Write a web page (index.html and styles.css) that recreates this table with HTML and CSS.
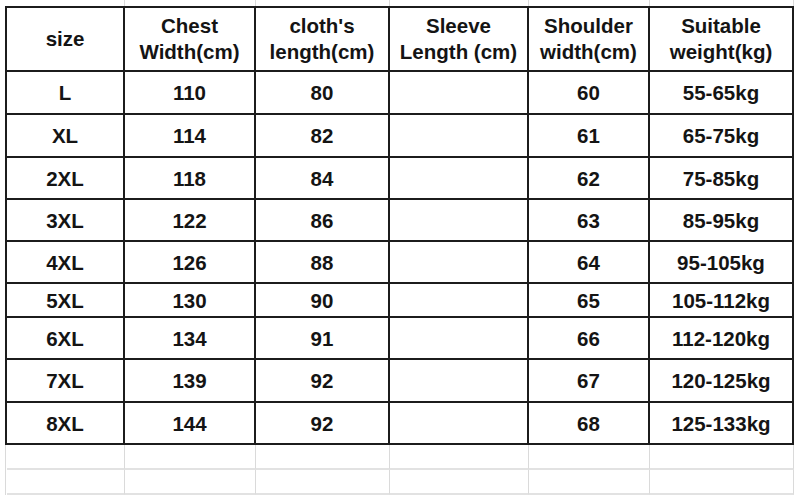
FILE: index.html
```html
<!DOCTYPE html>
<html>
<head>
<meta charset="utf-8">
<link rel="stylesheet" href="styles.css">
</head>
<body>
<div class="sheet">
  <div class="strip top">
    <div></div><div></div><div></div><div></div><div></div><div></div>
  </div>
  <div class="chart">
    <div class="c h">size</div>
    <div class="c h">Chest<br>Width(cm)</div>
    <div class="c h">cloth's<br>length(cm)</div>
    <div class="c h">Sleeve<br>Length (cm)</div>
    <div class="c h">Shoulder<br>width(cm)</div>
    <div class="c h">Suitable<br>weight(kg)</div>

    <div class="c">L</div><div class="c">110</div><div class="c">80</div><div class="c"></div><div class="c">60</div><div class="c">55-65kg</div>
    <div class="c">XL</div><div class="c">114</div><div class="c">82</div><div class="c"></div><div class="c">61</div><div class="c">65-75kg</div>
    <div class="c">2XL</div><div class="c">118</div><div class="c">84</div><div class="c"></div><div class="c">62</div><div class="c">75-85kg</div>
    <div class="c">3XL</div><div class="c">122</div><div class="c">86</div><div class="c"></div><div class="c">63</div><div class="c">85-95kg</div>
    <div class="c">4XL</div><div class="c">126</div><div class="c">88</div><div class="c"></div><div class="c">64</div><div class="c">95-105kg</div>
    <div class="c">5XL</div><div class="c">130</div><div class="c">90</div><div class="c"></div><div class="c">65</div><div class="c">105-112kg</div>
    <div class="c">6XL</div><div class="c">134</div><div class="c">91</div><div class="c"></div><div class="c">66</div><div class="c">112-120kg</div>
    <div class="c">7XL</div><div class="c">139</div><div class="c">92</div><div class="c"></div><div class="c">67</div><div class="c">120-125kg</div>
    <div class="c">8XL</div><div class="c">144</div><div class="c">92</div><div class="c"></div><div class="c">68</div><div class="c">125-133kg</div>
  </div>
  <div class="strip bottom">
    <div></div><div></div><div></div><div></div><div></div><div></div>
    <div></div><div></div><div></div><div></div><div></div><div></div>
  </div>
</div>
</body>
</html>
```
FILE: styles.css
```css
html, body {
  margin: 0;
  padding: 0;
  background: #fff;
}
body {
  width: 800px;
  height: 498px;
  overflow: hidden;
}
.sheet {
  padding-left: 5px;
  font-family: "Liberation Sans", Arial, sans-serif;
  color: #141414;
}
.strip {
  display: grid;
  grid-template-columns: 118px 131px 134px 139px 121px 144px;
  padding-left: 2px;
  width: 787px;
}
.strip > div {
  box-sizing: border-box;
  border-right: 1px solid #dadada;
}
.strip.top {
  height: 6px;
}
.strip.bottom {
  grid-template-rows: 25px 25px;
  border-left: 1px solid #dadada;
  padding-left: 1px;
}
.strip.bottom > div {
  border-bottom: 2px solid #e2e2e2;
}
.chart {
  display: grid;
  grid-template-columns: 118px 131px 134px 139px 121px 144px;
  grid-template-rows: 64px 43px 43px 42px 42px 42px 34px 42px 43px 42px;
  border-left: 2px solid #1c1c1c;
  border-top: 2px solid #1c1c1c;
  width: 787px;
}
.c {
  box-sizing: border-box;
  border-right: 2px solid #1c1c1c;
  border-bottom: 2px solid #1c1c1c;
  display: flex;
  align-items: center;
  justify-content: center;
  text-align: center;
  font-weight: bold;
  font-size: 20.5px;
  line-height: 26px;
  padding-top: 1px;
}
.h {
  padding-top: 0;
}
```
